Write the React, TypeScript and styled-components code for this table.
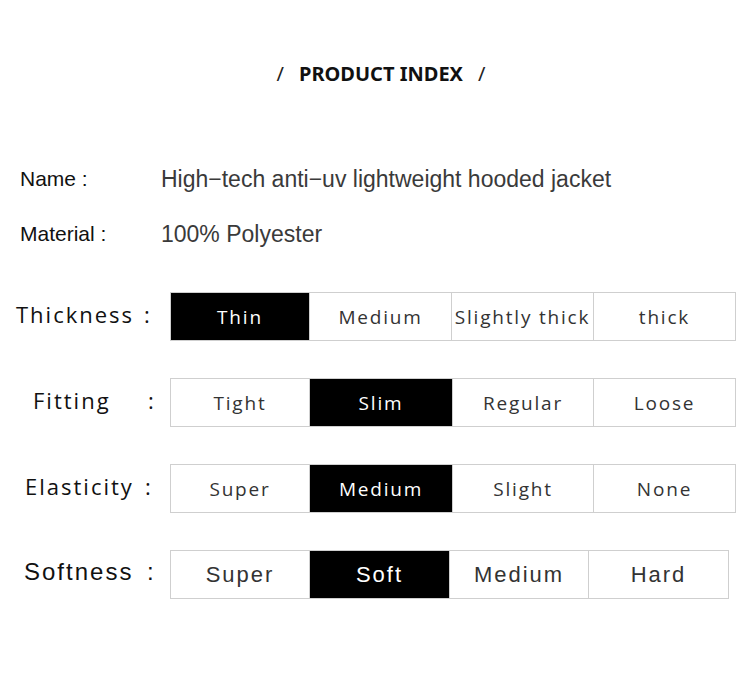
import React from "react";
import styled, { createGlobalStyle } from "styled-components";

const Global = createGlobalStyle`
  html, body { margin: 0; padding: 0; background: #fff; }
  body { width: 750px; height: 690px; overflow: hidden; }
`;

const Page = styled.div`
  width: 750px;
  height: 690px;
  box-sizing: border-box;
  padding-top: 60px;
  display: flex;
  flex-direction: column;
  color: #111;
`;

const Title = styled.h1`
  margin: 0;
  display: flex;
  justify-content: center;
  gap: 15px;
  padding-left: 12px;
  font-family: "Noto Sans", "Open Sans", sans-serif;
  font-weight: 700;
  font-size: 20px;
  line-height: 28px;
  color: #111;
`;

const Slash = styled.span`
  font-weight: 400;
  color: #222;
`;

const InfoList = styled.div`
  margin-top: 76px;
  display: flex;
  flex-direction: column;
  gap: 25px;
`;

const InfoRow = styled.div`
  display: flex;
  align-items: center;
  height: 30px;
  font-family: "Liberation Sans", Arial, sans-serif;
`;

const InfoLabel = styled.div`
  width: 141px;
  padding-left: 20px;
  font-size: 21px;
  color: #111;
`;

const InfoValue = styled.div`
  font-size: 23px;
  color: #3a3a3a;
`;

const Specs = styled.div`
  margin-top: 43px;
  display: flex;
  flex-direction: column;
  gap: 37px;
`;

const SpecRow = styled.div`
  display: flex;
  align-items: center;
  height: 49px;
`;

const SpecLabel = styled.div<{ $left: number; $helv?: boolean }>`
  box-sizing: border-box;
  width: 170px;
  padding-left: ${(p) => p.$left}px;
  display: flex;
  align-items: center;
  font-family: ${(p) =>
    p.$helv ? `"Liberation Sans", Arial, sans-serif` : `"Open Sans", "Noto Sans", sans-serif`};
  font-size: ${(p) => (p.$helv ? 24 : 22)}px;
  letter-spacing: 2px;
  color: #111;
  margin-top: -6px;
`;

const LabelName = styled.span<{ $width: number }>`
  display: inline-block;
  width: ${(p) => p.$width}px;
  white-space: nowrap;
`;

const Scale = styled.div`
  display: flex;
  border: 1px solid #cfcfcf;
  height: 100%;
  box-sizing: border-box;
`;

const Cell = styled.div<{ $active?: boolean; $w: number; $helv?: boolean }>`
  box-sizing: border-box;
  width: ${(p) => p.$w}px;
  display: flex;
  align-items: center;
  justify-content: center;
  border-left: 1px solid #cfcfcf;
  &:first-child { border-left: none; }
  background: ${(p) => (p.$active ? "#000" : "#fff")};
  color: ${(p) => (p.$active ? "#fff" : "#333")};
  font-family: ${(p) =>
    p.$helv ? `"Liberation Sans", Arial, sans-serif` : `"Open Sans", "Noto Sans", sans-serif`};
  font-size: ${(p) => (p.$helv ? 22 : 19)}px;
  letter-spacing: ${(p) => (p.$helv ? 2 : 1.8)}px;
  white-space: nowrap;
  overflow: hidden;
`;

type Spec = {
  name: string;
  nameWidth: number;
  left: number;
  options: string[];
  active: number;
  widths: number[];
  helv?: boolean;
};

const specs: Spec[] = [
  { name: "Thickness", nameWidth: 128, left: 16, options: ["Thin", "Medium", "Slightly thick", "thick"], active: 0, widths: [138, 142, 142, 142] },
  { name: "Fitting", nameWidth: 115, left: 33, options: ["Tight", "Slim", "Regular", "Loose"], active: 1, widths: [138, 143, 141, 142] },
  { name: "Elasticity", nameWidth: 120, left: 25, options: ["Super", "Medium", "Slight", "None"], active: 1, widths: [138, 143, 141, 142] },
  { name: "Softness", nameWidth: 123, left: 24, options: ["Super", "Soft", "Medium", "Hard"], active: 1, widths: [138, 140, 139, 140], helv: true },
];

export default function App() {
  return (
    <Page>
      <Global />
      <Title>
        <Slash>/</Slash>
        <span>PRODUCT INDEX</span>
        <Slash>/</Slash>
      </Title>
      <InfoList>
        <InfoRow>
          <InfoLabel>Name :</InfoLabel>
          <InfoValue>High−tech anti−uv lightweight hooded jacket</InfoValue>
        </InfoRow>
        <InfoRow>
          <InfoLabel>Material :</InfoLabel>
          <InfoValue>100% Polyester</InfoValue>
        </InfoRow>
      </InfoList>
      <Specs>
        {specs.map((s) => (
          <SpecRow key={s.name}>
            <SpecLabel $left={s.left} $helv={s.helv}>
              <LabelName $width={s.nameWidth}>{s.name}</LabelName>
              <span>:</span>
            </SpecLabel>
            <Scale>
              {s.options.map((o, i) => (
                <Cell key={o} $w={s.widths[i]} $active={i === s.active} $helv={s.helv}>
                  {o}
                </Cell>
              ))}
            </Scale>
          </SpecRow>
        ))}
      </Specs>
    </Page>
  );
}
